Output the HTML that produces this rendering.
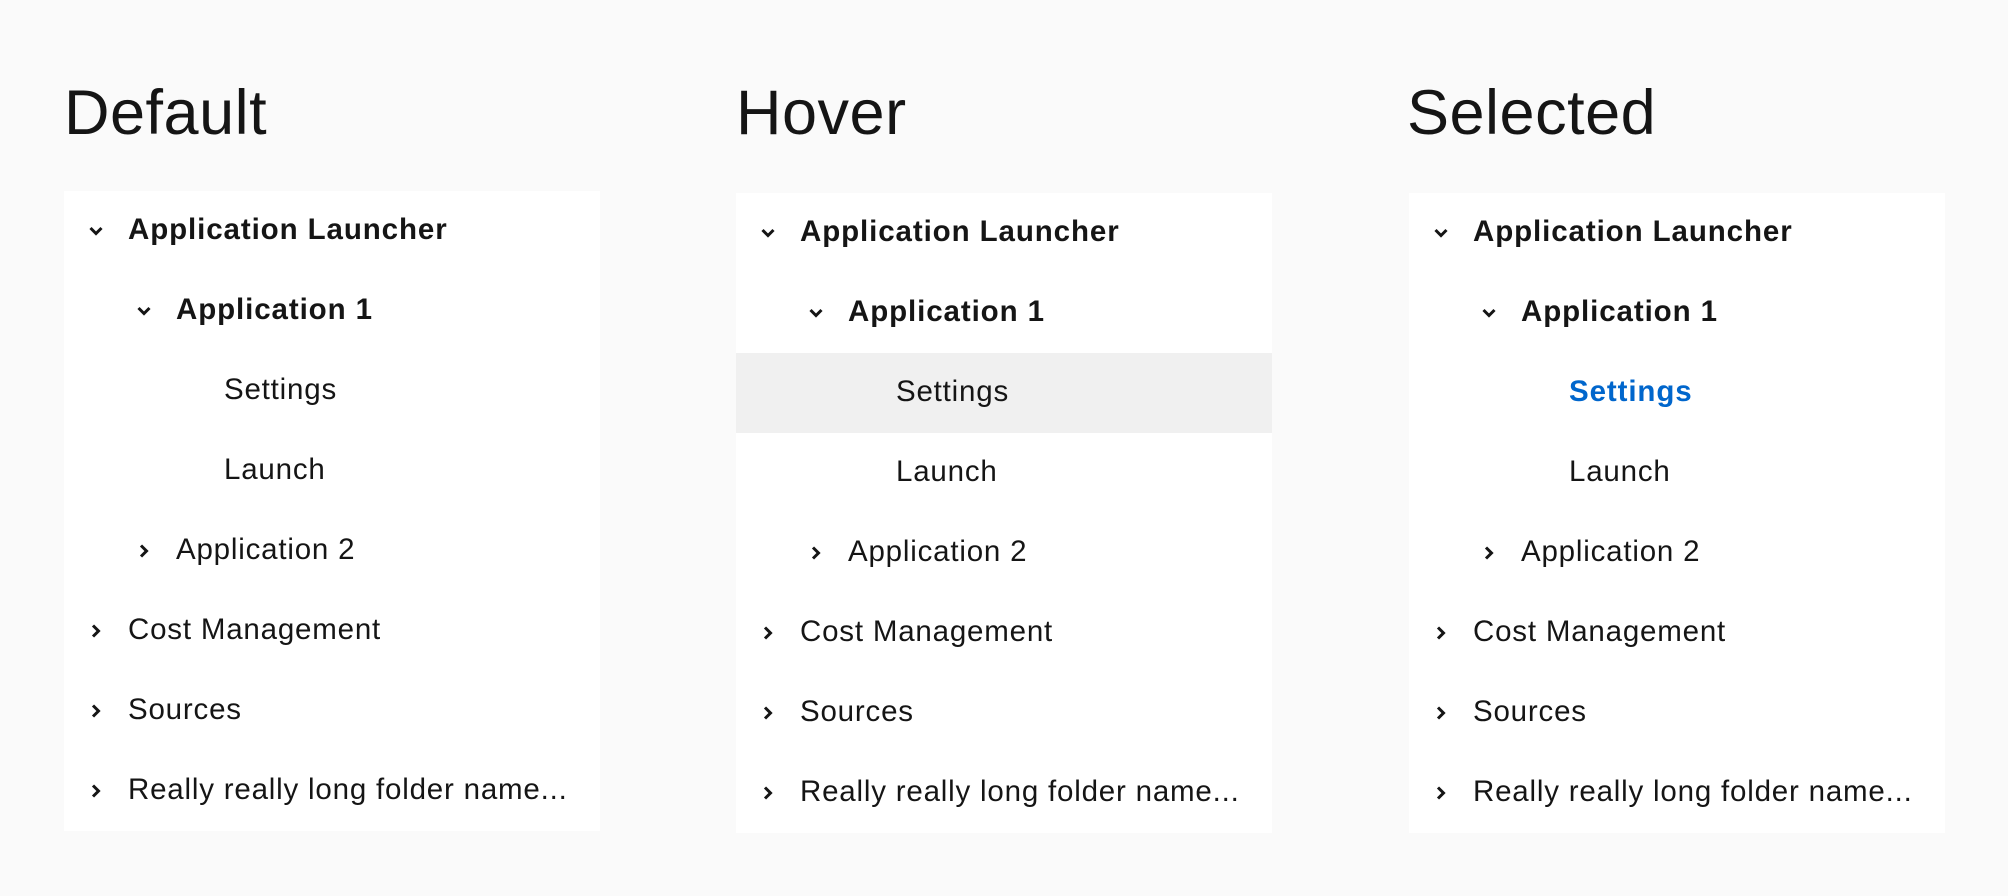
<!DOCTYPE html>
<html><head><style>
body{margin:0;width:2008px;height:896px;background:#fafafa;font-family:"Liberation Sans",sans-serif;color:#151515;position:relative;overflow:hidden}
h1{position:absolute;margin:0;font-weight:400;font-size:63px;top:77px;letter-spacing:0.5px}
.p{position:absolute;width:536px;height:640px;background:#fff}
.r{position:relative;height:80px;font-size:29.5px;line-height:78px;white-space:nowrap;letter-spacing:0.8px}
.r span{position:absolute}
.b{font-weight:700;letter-spacing:0.9px}
.r svg{position:absolute;top:32px}
.h{background:#f0f0f0}
.s{color:#0066cc;font-weight:700;letter-spacing:0.9px}
</style></head><body>
<h1 style="left:64px">Default</h1>
<h1 style="left:736px">Hover</h1>
<h1 style="left:1407px">Selected</h1>

<div class="p" style="left:64px;top:191px" id="a"></div>
<div class="p" style="left:736px;top:193px" id="b"></div>
<div class="p" style="left:1409px;top:193px" id="c"></div>

<script>
const down='<svg width="16" height="16" viewBox="0 0 16 16"><path d="M2.5 5 L8 10.5 L13.5 5" fill="none" stroke="#151515" stroke-width="3"/></svg>';
const right='<svg width="16" height="16" viewBox="0 0 16 16"><path d="M5 2.5 L10.5 8 L5 13.5" fill="none" stroke="#151515" stroke-width="3"/></svg>';
function rows(sel){
 const R=[
  [down,24,64,'Application Launcher','b'],
  [down,72,112,'Application 1','b'],
  ['',0,160,'Settings','set'],
  ['',0,160,'Launch',''],
  [right,72,112,'Application 2',''],
  [right,24,64,'Cost Management',''],
  [right,24,64,'Sources',''],
  [right,24,64,'Really really long folder name...','']];
 return R.map(r=>{
  let cls='r', tc=r[4]=='b'?'b':'';
  if(r[4]=='set'){ if(sel=='h')cls+=' h'; if(sel=='s')tc='s'; }
  let ic=r[0]?r[0].replace('<svg','<svg style="left:'+r[1]+'px"'):'';
  return '<div class="'+cls+'">'+ic+'<span class="'+tc+'" style="left:'+r[2]+'px">'+r[3]+'</span></div>';
 }).join('');
}
document.getElementById('a').innerHTML=rows('');
document.getElementById('b').innerHTML=rows('h');
document.getElementById('c').innerHTML=rows('s');
</script>
</body></html>
